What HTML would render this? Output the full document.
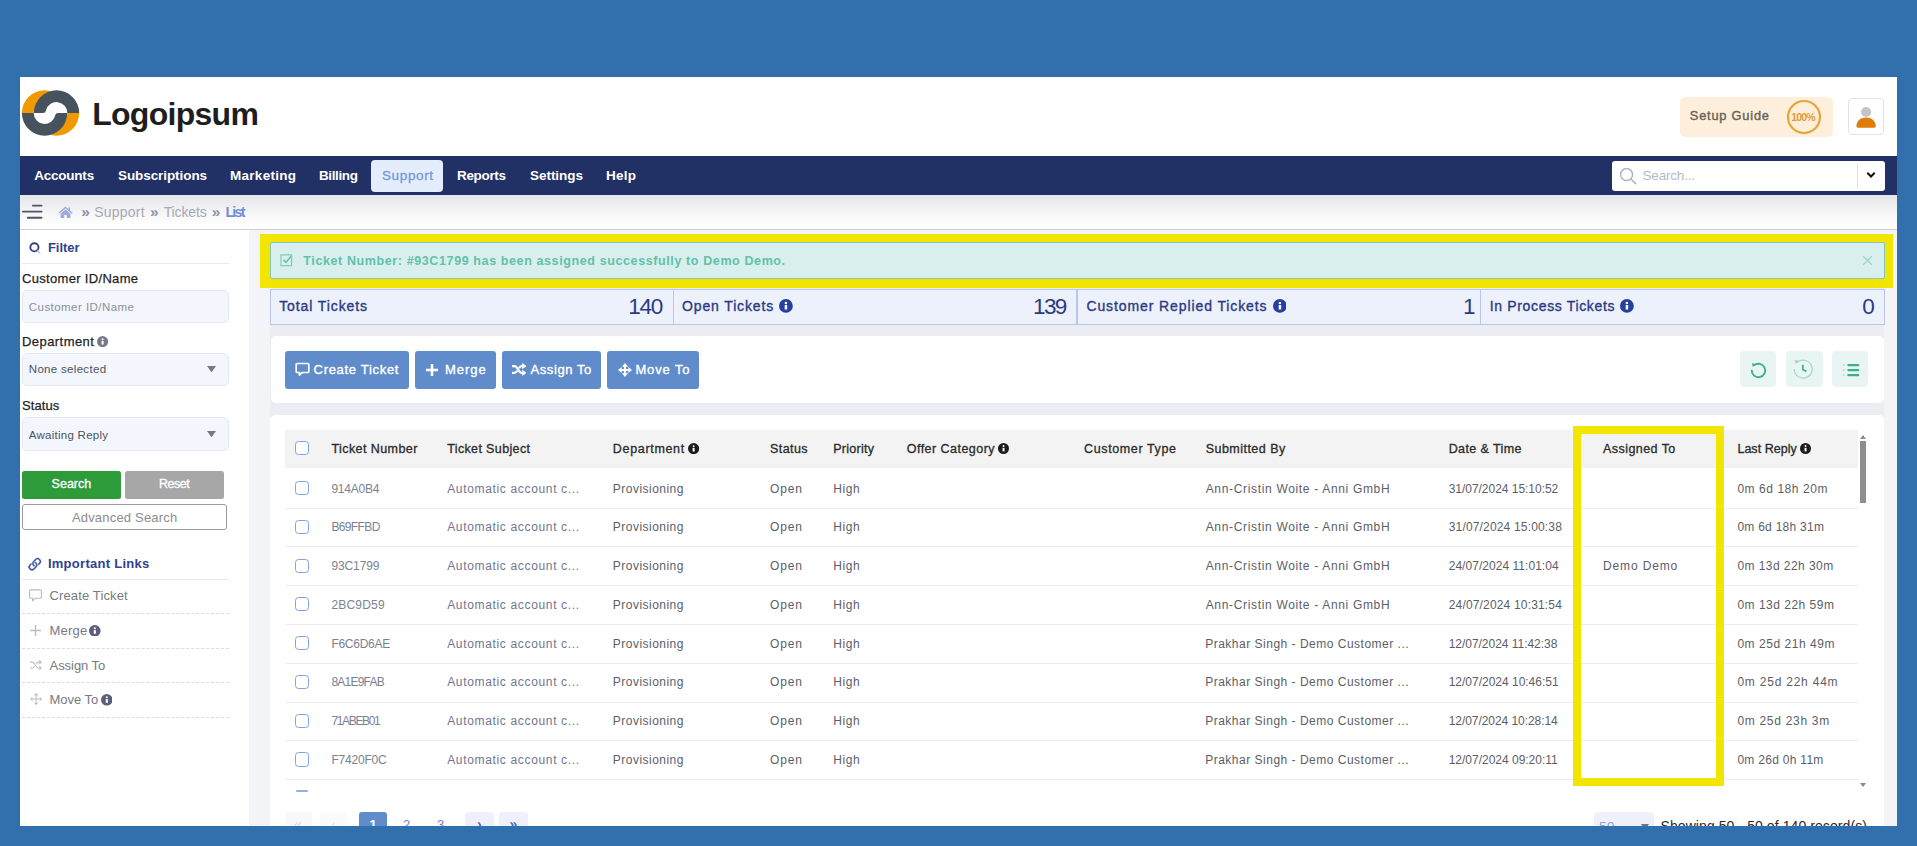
<!DOCTYPE html>
<html lang="en"><head><meta charset="utf-8"><title>Support Tickets</title><style>
html,body{margin:0;padding:0}
body{width:1917px;height:846px;overflow:hidden;background:#3170ad;font-family:"Liberation Sans", sans-serif;position:relative}
#app{position:absolute;left:20px;top:77px;width:1877px;height:749px;overflow:hidden;background:#fff}
#in{position:absolute;left:-20px;top:-77px;width:1917px;height:846px}
.b{position:absolute;display:block}
.t{position:absolute;white-space:nowrap;line-height:1;display:block}
</style></head>
<body><div id="app"><div id="in">
<header>
<svg class="b" style="left:0.0px;top:0.0px;" width="120" height="160" viewBox="0 0 120 160"><path d="M21.90 113.0A22.7 22.7 0 0 1 67.30 113.0L55.50 113.0A10.9 10.9 0 0 0 33.70 113.0Z" fill="#f09a00"/><path d="M34.10 113.0A22.4 22.4 0 0 1 78.90 113.0Z" fill="#fff"/><path d="M33.80 113.0A22.7 22.7 0 0 1 79.20 113.0L67.40 113.0A10.9 10.9 0 0 0 45.91 110.40Q45.60 113.0 43.00 113.0Z" fill="#46525d"/><path d="M33.80 113.0A22.7 22.7 0 0 0 79.20 113.0L67.40 113.0A10.9 10.9 0 0 1 45.60 113.0Z" fill="#f09a00"/><path d="M22.20 113.0A22.4 22.4 0 0 0 67.00 113.0Z" fill="#fff"/><path d="M21.90 113.0A22.7 22.7 0 0 0 67.30 113.0L58.10 113.0Q55.50 113.0 55.19 115.60A10.9 10.9 0 0 1 33.70 113.0Z" fill="#46525d"/></svg>
<span class="t" style="left:92.2px;top:97.9px;font-size:32px;color:#1e1e1e;font-weight:700;letter-spacing:-0.72px;">Logoipsum</span>
<div class="b" style="left:1680.3px;top:96.6px;width:152.7px;height:40.2px;background:#fdefdb;border-radius:5px;"></div>
<span class="t" style="left:1689.8px;top:109.5px;font-size:12.8px;color:#6b6357;letter-spacing:0.80px;-webkit-text-stroke:0.4px #6b6357;">Setup Guide</span>
<svg class="b" style="left:1783.5px;top:97.3px;" width="40" height="40" viewBox="0 0 40 40"><circle cx="20" cy="20" r="16" fill="none" stroke="#e8a534" stroke-width="2.2"/></svg>
<span class="t" style="left:1791.2px;top:112.1px;font-size:10.5px;color:#e39a3c;font-weight:700;letter-spacing:-0.82px;">100%</span>
<div class="b" style="left:1848.0px;top:98.0px;width:36.4px;height:37.0px;background:#fff;border:1px solid #e2e2e2;box-sizing:border-box;border-radius:4px;"></div>
<svg class="b" style="left:1848.0px;top:98.5px;" width="36.4" height="36.1" viewBox="0 0 36.4 36.1"><circle cx="18.1" cy="13" r="5" fill="#c3c4c6"/><path d="M10 28.7a1.600 1.600 0 0 1-1.600-1.700c.3-5.200 4.200-8.600 9.700-8.600s9.400 3.400 9.700 8.600a1.600 1.600 0 0 1-1.600 1.700z" fill="#e07d0a"/></svg>
</header><nav>
<div class="b" style="left:20.0px;top:155.8px;width:1877.0px;height:39.4px;background:#223165;"></div>
<div class="b" style="left:371.0px;top:160.3px;width:72.0px;height:31.3px;background:#e4edfb;border-radius:4px;"></div>
<span class="t" style="left:34.2px;top:168.6px;font-size:13.5px;color:#fff;font-weight:700;letter-spacing:-0.22px;">Accounts</span>
<span class="t" style="left:118.0px;top:168.6px;font-size:13.5px;color:#fff;font-weight:700;letter-spacing:-0.08px;">Subscriptions</span>
<span class="t" style="left:230.0px;top:168.6px;font-size:13.5px;color:#fff;font-weight:700;letter-spacing:0.28px;">Marketing</span>
<span class="t" style="left:319.0px;top:168.6px;font-size:13.5px;color:#fff;font-weight:700;letter-spacing:-0.38px;">Billing</span>
<span class="t" style="left:382.0px;top:168.6px;font-size:13.5px;color:#7399de;letter-spacing:0.62px;-webkit-text-stroke:0.3px #7399de;">Support</span>
<span class="t" style="left:457.0px;top:168.6px;font-size:13.5px;color:#fff;font-weight:700;letter-spacing:-0.34px;">Reports</span>
<span class="t" style="left:530.0px;top:168.6px;font-size:13.5px;color:#fff;font-weight:700;letter-spacing:-0.04px;">Settings</span>
<span class="t" style="left:606.0px;top:168.6px;font-size:13.5px;color:#fff;font-weight:700;letter-spacing:0.24px;">Help</span>
<div class="b" style="left:1612.0px;top:161.3px;width:272.6px;height:29.4px;background:#fff;border-radius:3px;"></div>
<div class="b" style="left:1857.0px;top:163.0px;width:1.0px;height:26.0px;background:#e4e4e4;"></div>
<svg class="b" style="left:1619.0px;top:167.0px;" width="18" height="18" viewBox="0 0 18 18"><circle cx="7.6" cy="7.6" r="6" fill="none" stroke="#aab7c1" stroke-width="1.5"/><path d="M12 12l4.6 4.6" stroke="#aab7c1" stroke-width="1.6" stroke-linecap="round"/></svg>
<span class="t" style="left:1642.5px;top:168.9px;font-size:13.5px;color:#b4bbc3;letter-spacing:-0.19px;">Search...</span>
<svg class="b" style="left:1865.5px;top:170.5px;" width="10" height="8" viewBox="0 0 10 8"><path d="M1.3 1.8l3.7 3.7 3.7-3.7" fill="none" stroke="#111" stroke-width="2"/></svg>
</nav><div class="crumbs">
<div class="b" style="left:20.0px;top:195.2px;width:1877.0px;height:33.8px;background:linear-gradient(#e6e6e9,#fbfbfc 70%,#ffffff)"></div>
<div class="b" style="left:20.0px;top:228.6px;width:1877.0px;height:1.4px;background:#d0d1d4;"></div>
<svg class="b" style="left:21.0px;top:203.0px;" width="22" height="17" viewBox="0 0 22 17"><path d="M11.800 2.600h8.800M2 8.600h18.600M6.800 14.700h13.800" stroke="#50556a" stroke-width="1.900" stroke-linecap="round"/></svg>
<svg class="b" style="left:58.0px;top:205.5px;" width="15" height="12.5" viewBox="0 0 15 12.5"><path d="M7.5 .6L.3 6.8l.9 1 6.3-5.4 6.3 5.4.9-1-2.6-2.2V1.5h-1.6v1.7zM2.6 7.6v4.7h3.6V8.9h2.6v3.4h3.6V7.6L7.5 3.5z" fill="#9dabde"/></svg>
<span class="t" style="left:81.2px;top:203.9px;font-size:15.5px;color:#8a91ad;font-weight:700;letter-spacing:-0.33px;">»</span>
<span class="t" style="left:150.0px;top:203.9px;font-size:15.5px;color:#8a91ad;font-weight:700;letter-spacing:-0.32px;">»</span>
<span class="t" style="left:211.7px;top:203.9px;font-size:15.5px;color:#8a91ad;font-weight:700;letter-spacing:-0.32px;">»</span>
<span class="t" style="left:94.2px;top:204.8px;font-size:14px;color:#a6a9b4;letter-spacing:0.24px;">Support</span>
<span class="t" style="left:163.7px;top:204.8px;font-size:14px;color:#a6a9b4;letter-spacing:-0.14px;">Tickets</span>
<span class="t" style="left:225.5px;top:204.8px;font-size:14px;color:#6c8fdb;font-weight:700;letter-spacing:-1.70px;">List</span>
</div><div class="pagebg">
<div class="b" style="left:249.2px;top:230.0px;width:1647.8px;height:596.0px;background:#f3f4f8;"></div>
<div class="b" style="left:270.3px;top:288.0px;width:1614.1px;height:538.0px;background:#ecedf3;"></div>
</div><aside>
<svg class="b" style="left:28.5px;top:241.7px;" width="13" height="13" viewBox="0 0 13 13"><circle cx="5.400" cy="5.300" r="4.100" fill="none" stroke="#34418a" stroke-width="1.900"/><path d="M8.600 8.600l2.400 2.500" stroke="#a9b0d2" stroke-width="1.100" stroke-linecap="round"/></svg>
<span class="t" style="left:47.9px;top:241.2px;font-size:13px;color:#30438f;font-weight:700;letter-spacing:-0.02px;">Filter</span>
<div class="b" style="left:22.0px;top:262.5px;width:206.6px;height:1.2px;background:#e6e8ec;"></div>
<span class="t" style="left:22.0px;top:271.5px;font-size:13px;color:#1f1f1f;letter-spacing:0.32px;-webkit-text-stroke:0.25px #1f1f1f;">Customer ID/Name</span>
<div class="b" style="left:22.0px;top:289.6px;width:206.6px;height:33.3px;background:#f3f6fd;border:1px solid #e3e8f4;box-sizing:border-box;border-radius:5px;"></div>
<span class="t" style="left:28.8px;top:301.6px;font-size:11.5px;color:#8b909a;letter-spacing:0.45px;">Customer ID/Name</span>
<span class="t" style="left:22.0px;top:334.9px;font-size:13px;color:#1f1f1f;letter-spacing:0.44px;-webkit-text-stroke:0.25px #1f1f1f;">Department</span>
<svg class="b" style="left:97.3px;top:335.8px;" width="11.2" height="11.2" viewBox="0 0 16 16"><circle cx="8" cy="8" r="8" fill="#767b87"/><circle cx="8" cy="4.500" r="1.450" fill="#fff"/><path d="M6.600 7h2.900v5.200H6.600z" fill="#fff"/></svg>
<div class="b" style="left:22.0px;top:352.6px;width:206.6px;height:33.2px;background:#f3f6fd;border:1px solid #e3e8f4;box-sizing:border-box;border-radius:5px;"></div>
<span class="t" style="left:28.8px;top:364.2px;font-size:11.5px;color:#4e535c;letter-spacing:0.31px;">None selected</span>
<svg class="b" style="left:207.0px;top:365.8px;" width="9" height="6.4" viewBox="0 0 9 6.4"><path d="M0 0h9L4.5 6.4z" fill="#767b84"/></svg>
<span class="t" style="left:22.0px;top:399.3px;font-size:13px;color:#1f1f1f;letter-spacing:0.09px;-webkit-text-stroke:0.25px #1f1f1f;">Status</span>
<div class="b" style="left:22.0px;top:417.4px;width:206.6px;height:33.4px;background:#f3f6fd;border:1px solid #e3e8f4;box-sizing:border-box;border-radius:5px;"></div>
<span class="t" style="left:28.8px;top:429.7px;font-size:11.5px;color:#4e535c;letter-spacing:0.26px;">Awaiting Reply</span>
<svg class="b" style="left:207.0px;top:431.0px;" width="9" height="6.4" viewBox="0 0 9 6.4"><path d="M0 0h9L4.5 6.4z" fill="#767b84"/></svg>
<div class="b" style="left:22.1px;top:470.9px;width:98.6px;height:28.4px;background:#2e9b3a;border-radius:2.5px;"></div>
<span class="t" style="left:51.6px;top:478.4px;font-size:12.5px;color:#fff;-webkit-text-stroke:0.3px #fff;">Search</span>
<div class="b" style="left:125.2px;top:470.9px;width:98.5px;height:28.4px;background:#a7a7a7;border-radius:2.5px;"></div>
<span class="t" style="left:158.9px;top:478.4px;font-size:12.5px;color:#fff;letter-spacing:-0.44px;-webkit-text-stroke:0.3px #fff;">Reset</span>
<div class="b" style="left:22.0px;top:504.4px;width:204.8px;height:25.8px;background:#fff;border:1.3px solid #9a9a9a;box-sizing:border-box;border-radius:3px;"></div>
<span class="t" style="left:71.9px;top:510.7px;font-size:13px;color:#8c8c8c;letter-spacing:0.19px;">Advanced Search</span>
<svg class="b" style="left:26.2px;top:555.5px;" width="17.6" height="17.6" viewBox="0 0 16 16"><path fill="#3450a6" stroke="#3450a6" stroke-width="0.450" d="M4.715 6.542 3.343 7.914a3 3 0 1 0 4.243 4.243l1.828-1.829A3 3 0 0 0 8.586 5.500L8 6.086a1 1 0 0 0-.154.199 2 2 0 0 1 .861 3.337L6.880 11.450a2 2 0 1 1-2.830-2.830l.793-.792a4 4 0 0 1-.128-1.287z"/><path fill="#3450a6" stroke="#3450a6" stroke-width="0.450" d="M6.586 4.672A3 3 0 0 0 7.414 9.500l.775-.776a2 2 0 0 1-.896-3.346L9.120 3.550a2 2 0 1 1 2.830 2.830l-.793.792c.112.420.155.855.128 1.287l1.372-1.372a3 3 0 1 0-4.243-4.243z"/></svg>
<span class="t" style="left:47.9px;top:557.4px;font-size:13px;color:#30438f;font-weight:700;letter-spacing:0.28px;">Important Links</span>
<div class="b" style="left:22.0px;top:578.6px;width:206.7px;height:1.2px;background:#e6e8ec;"></div>
<span class="t" style="left:49.5px;top:589.1px;font-size:13px;color:#777b83;letter-spacing:0.13px;">Create Ticket</span>
<svg class="b" style="left:28.9px;top:588.7px;" width="13" height="13" viewBox="0 0 13 13"><path d="M1.6.9h9.8a1 1 0 0 1 1 1v6.4a1 1 0 0 1-1 1H6.3L3.6 11.6V9.3h-2a1 1 0 0 1-1-1V1.9a1 1 0 0 1 1-1z" fill="none" stroke="#b9bcc2" stroke-width="1.1"/></svg>
<span class="t" style="left:49.5px;top:623.8px;font-size:13px;color:#777b83;letter-spacing:0.19px;">Merge</span>
<svg class="b" style="left:29.5px;top:624.6px;" width="11" height="11" viewBox="0 0 11 11"><path d="M5.5 0v11M0 5.5h11" stroke="#b9bcc2" stroke-width="1.4"/></svg>
<svg class="b" style="left:89.2px;top:624.5px;" width="11.6" height="11.6" viewBox="0 0 16 16"><circle cx="8" cy="8" r="8" fill="#5b5f78"/><circle cx="8" cy="4.500" r="1.450" fill="#fff"/><path d="M6.600 7h2.900v5.200H6.600z" fill="#fff"/></svg>
<span class="t" style="left:49.5px;top:658.8px;font-size:13px;color:#777b83;letter-spacing:-0.04px;">Assign To</span>
<svg class="b" style="left:29.5px;top:659.6px;" width="12.1" height="10.2" viewBox="0 0 13 11"><g fill="none" stroke="#b9bcc2" stroke-width="1.2"><path d="M0 2.3h2.6c2.6 0 3.6 6.4 6.4 6.4h2.2M0 8.7h2.6c1 0 1.7-.9 2.3-2M6.7 4.3c.6-1.1 1.300-2 2.300-2h2.2"/><path d="M10 .4l2 1.900-2 1.900M10 6.800l2 1.900-2 1.900" /></g></svg>
<span class="t" style="left:49.5px;top:693.2px;font-size:13px;color:#777b83;letter-spacing:-0.02px;">Move To</span>
<svg class="b" style="left:29.6px;top:693.2px;" width="12.2" height="12.2" viewBox="0 0 13 13"><g fill="none" stroke="#b9bcc2" stroke-width="1.1"><path d="M6.500 1v11M1 6.500h11"/><path d="M4.800 2.600l1.700-1.700 1.700 1.700M4.800 10.400l1.700 1.700 1.700-1.700M2.600 4.800L.9 6.500l1.700 1.700M10.400 4.800l1.700 1.700-1.700 1.700"/></g></svg>
<svg class="b" style="left:100.8px;top:694.2px;" width="11.6" height="11.6" viewBox="0 0 16 16"><circle cx="8" cy="8" r="8" fill="#5b5f78"/><circle cx="8" cy="4.500" r="1.450" fill="#fff"/><path d="M6.600 7h2.900v5.200H6.600z" fill="#fff"/></svg>
<div class="b" style="left:22.0px;top:612.8px;width:206.7px;height:1.0px;border-top:1px dashed #dadce0"></div>
<div class="b" style="left:22.0px;top:647.5px;width:206.7px;height:1.0px;border-top:1px dashed #dadce0"></div>
<div class="b" style="left:22.0px;top:682.4px;width:206.7px;height:1.0px;border-top:1px dashed #dadce0"></div>
<div class="b" style="left:22.0px;top:716.9px;width:206.7px;height:1.0px;border-top:1px dashed #dadce0"></div>
</aside><main><section class="alert">
<div class="b" style="left:260.3px;top:234.2px;width:1632.5px;height:53.4px;background:#f2e500;"></div>
<div class="b" style="left:269.7px;top:242.4px;width:1615.0px;height:37.0px;background:#d9efee;border:1px solid #86c5bd;box-sizing:border-box;border-radius:2px;"></div>
<svg class="b" style="left:280.0px;top:254.0px;" width="13.4" height="12.6" viewBox="0 0 13.4 12.6"><path d="M1 .9h10.600v10.800H1z" fill="none" stroke="#7ecdbb" stroke-width="1.2"/><path d="M3.400 5.800l2.600 2.600 5-6.200" fill="none" stroke="#5cbfa5" stroke-width="1.400"/></svg>
<span class="t" style="left:303.3px;top:254.9px;font-size:12.5px;color:#62c1a9;font-weight:700;letter-spacing:0.61px;">Ticket Number: #93C1799 has been assigned successfully to Demo Demo.</span>
<svg class="b" style="left:1861.5px;top:255.0px;" width="11" height="11" viewBox="0 0 11 11"><path d="M1.200 1.200l8.600 8.600M9.800 1.200l-8.600 8.600" stroke="#9ed5ca" stroke-width="1.300"/></svg>
</section><section class="stats">
<div class="b" style="left:269.7px;top:289.3px;width:1614.9px;height:35.3px;background:#edf1fb;border:1px solid #b9c5ea;box-sizing:border-box;"></div>
<div class="b" style="left:672.8px;top:289.3px;width:1.2px;height:35.3px;background:#b9c5ea;"></div>
<div class="b" style="left:1076.4px;top:289.3px;width:1.2px;height:35.3px;background:#b9c5ea;"></div>
<div class="b" style="left:1480.1px;top:289.3px;width:1.2px;height:35.3px;background:#b9c5ea;"></div>
<span class="t" style="left:279.2px;top:298.7px;font-size:14px;color:#2c3a82;letter-spacing:0.90px;-webkit-text-stroke:0.35px #2c3a82;">Total Tickets</span>
<span class="t" style="left:628.3px;top:295.5px;font-size:22.5px;color:#2c3a82;letter-spacing:-1.27px;">140</span>
<span class="t" style="left:682.0px;top:298.7px;font-size:14px;color:#2c3a82;letter-spacing:0.87px;-webkit-text-stroke:0.35px #2c3a82;">Open Tickets</span>
<svg class="b" style="left:779.3px;top:298.9px;" width="13.8" height="13.8" viewBox="0 0 16 16"><circle cx="8" cy="8" r="8" fill="#27409f"/><circle cx="8" cy="4.500" r="1.450" fill="#fff"/><path d="M6.600 7h2.900v5.200H6.600z" fill="#fff"/></svg>
<span class="t" style="left:1033.1px;top:295.5px;font-size:22.5px;color:#2c3a82;letter-spacing:-1.67px;">139</span>
<span class="t" style="left:1086.4px;top:298.7px;font-size:14px;color:#2c3a82;letter-spacing:0.90px;-webkit-text-stroke:0.35px #2c3a82;">Customer Replied Tickets</span>
<svg class="b" style="left:1272.5px;top:298.9px;" width="13.8" height="13.8" viewBox="0 0 16 16"><circle cx="8" cy="8" r="8" fill="#27409f"/><circle cx="8" cy="4.500" r="1.450" fill="#fff"/><path d="M6.600 7h2.900v5.200H6.600z" fill="#fff"/></svg>
<span class="t" style="left:1463.0px;top:295.5px;font-size:22.5px;color:#2c3a82;">1</span>
<span class="t" style="left:1489.8px;top:298.7px;font-size:14px;color:#2c3a82;letter-spacing:0.65px;-webkit-text-stroke:0.35px #2c3a82;">In Process Tickets</span>
<svg class="b" style="left:1620.3px;top:298.9px;" width="13.8" height="13.8" viewBox="0 0 16 16"><circle cx="8" cy="8" r="8" fill="#27409f"/><circle cx="8" cy="4.500" r="1.450" fill="#fff"/><path d="M6.600 7h2.900v5.200H6.600z" fill="#fff"/></svg>
<span class="t" style="left:1862.3px;top:295.5px;font-size:22.5px;color:#2c3a82;">0</span>
</section><section class="actions">
<div class="b" style="left:270.6px;top:336.2px;width:1613.2px;height:67.1px;background:#fff;border-radius:5px;"></div>
<div class="b" style="left:285.3px;top:350.5px;width:123.6px;height:38.4px;background:#608ccb;border-radius:3px;"></div>
<div class="b" style="left:415.0px;top:350.5px;width:81.0px;height:38.4px;background:#608ccb;border-radius:3px;"></div>
<div class="b" style="left:501.8px;top:350.5px;width:99.2px;height:38.4px;background:#608ccb;border-radius:3px;"></div>
<div class="b" style="left:607.4px;top:350.5px;width:91.8px;height:38.4px;background:#608ccb;border-radius:3px;"></div>
<span class="t" style="left:313.6px;top:362.7px;font-size:13px;color:#fff;letter-spacing:0.69px;-webkit-text-stroke:0.35px #fff;">Create Ticket</span>
<svg class="b" style="left:295.0px;top:361.8px;" width="15" height="15" viewBox="0 0 15 15"><path d="M2.200 1.500h10.600a1 1 0 0 1 1 1v7a1 1 0 0 1-1 1H7.300L4.400 13v-2.500H2.200a1 1 0 0 1-1-1v-7a1 1 0 0 1 1-1z" fill="none" stroke="#fff" stroke-width="1.700" stroke-linejoin="round"/></svg>
<span class="t" style="left:444.9px;top:362.7px;font-size:13px;color:#fff;letter-spacing:0.99px;-webkit-text-stroke:0.35px #fff;">Merge</span>
<svg class="b" style="left:425.6px;top:363.9px;" width="12" height="12" viewBox="0 0 12 12"><path d="M6 0v12M0 6h12" stroke="#fff" stroke-width="2.600"/></svg>
<span class="t" style="left:530.5px;top:362.7px;font-size:13px;color:#fff;letter-spacing:0.58px;-webkit-text-stroke:0.35px #fff;">Assign To</span>
<svg class="b" style="left:512.0px;top:362.9px;" width="14.4" height="13" viewBox="0 0 14.4 13"><g fill="none" stroke="#fff" stroke-width="2.200"><path d="M0 3.100h2.600c3 0 4 6.800 7 6.800h1.400M0 9.900h2.600c1.200 0 2-.9 2.600-2.100M7 5.200c.6-1.200 1.400-2.100 2.600-2.100h1.400"/></g><path d="M10.200 0l4.200 3.100-4.200 3.100zM10.200 6.800l4.200 3.100-4.200 3.100z" fill="#fff"/></svg>
<span class="t" style="left:635.4px;top:362.7px;font-size:13px;color:#fff;letter-spacing:0.87px;-webkit-text-stroke:0.35px #fff;">Move To</span>
<svg class="b" style="left:618.0px;top:362.5px;" width="14" height="14" viewBox="0 0 14 14"><path d="M7 2.500v9M2.500 7h9" stroke="#fff" stroke-width="2.200"/><path d="M7 0l3.100 3.700H3.900zM7 14l3.100-3.700H3.900zM0 7l3.700-3.100v6.200zM14 7l-3.700-3.100v6.200z" fill="#fff"/></svg>
<div class="b" style="left:1739.9px;top:351.0px;width:36.4px;height:36.4px;background:#e8f5f3;border-radius:4px;"></div>
<div class="b" style="left:1786.2px;top:351.0px;width:36.6px;height:36.4px;background:#e8f5f3;border-radius:4px;"></div>
<div class="b" style="left:1831.9px;top:351.0px;width:36.6px;height:36.4px;background:#e8f5f3;border-radius:4px;"></div>
<svg class="b" style="left:1749.0px;top:359.8px;" width="19" height="19" viewBox="0 0 19 19"><path d="M5.100 5.400A6.700 6.700 0 1 1 2.800 9.800" fill="none" stroke="#3dad93" stroke-width="1.900"/><path d="M3 3.200l3.700.7-2.900 3z" fill="#3dad93"/></svg>
<svg class="b" style="left:1791.8px;top:358.2px;" width="22" height="22" viewBox="0 0 22 22"><path d="M5.300 4.300A9 9 0 1 1 2.200 11" fill="none" stroke="#a5d8cb" stroke-width="1.200"/><path d="M2.600 1.800l4.400 1-3.500 3.200z" fill="#a5d8cb"/><path d="M10.800 6.800v4.800l3.600 2" fill="none" stroke="#3dad93" stroke-width="1.700"/></svg>
<svg class="b" style="left:1841.5px;top:362.5px;" width="18" height="15" viewBox="0 0 18 15"><path d="M6.400 2.100h9.800M6.400 7.100h9.800M6.400 12.200h9.800" stroke="#3dad93" stroke-width="2.300" stroke-linecap="round"/><path d="M1.700 2.100h.1M1.700 7.100h.1M1.700 12.200h.1" stroke="#b5e0d5" stroke-width="2" stroke-linecap="round"/></svg>
</section><section class="tickets">
<div class="b" style="left:270.3px;top:415.4px;width:1613.5px;height:424.6px;background:#fff;border-radius:5px;"></div>
<div class="b" style="left:285.4px;top:430.2px;width:1572.2px;height:37.5px;background:#f3f3f3;"></div>
<div class="b" style="left:294.8px;top:441.0px;width:14.6px;height:14.2px;background:#fff;border:1.700px solid #7fa3e4;box-sizing:border-box;border-radius:3.5px;"></div>
<span class="t" style="left:331.4px;top:442.5px;font-size:12.5px;color:#2a2a2a;letter-spacing:0.43px;-webkit-text-stroke:0.3px #2a2a2a;">Ticket Number</span>
<span class="t" style="left:447.2px;top:442.5px;font-size:12.5px;color:#2a2a2a;letter-spacing:0.37px;-webkit-text-stroke:0.3px #2a2a2a;">Ticket Subject</span>
<span class="t" style="left:612.8px;top:442.5px;font-size:12.5px;color:#2a2a2a;letter-spacing:0.68px;-webkit-text-stroke:0.3px #2a2a2a;">Department</span>
<span class="t" style="left:770.0px;top:442.5px;font-size:12.5px;color:#2a2a2a;letter-spacing:0.43px;-webkit-text-stroke:0.3px #2a2a2a;">Status</span>
<span class="t" style="left:833.2px;top:442.5px;font-size:12.5px;color:#2a2a2a;letter-spacing:0.26px;-webkit-text-stroke:0.3px #2a2a2a;">Priority</span>
<span class="t" style="left:906.8px;top:442.5px;font-size:12.5px;color:#2a2a2a;letter-spacing:0.46px;-webkit-text-stroke:0.3px #2a2a2a;">Offer Category</span>
<span class="t" style="left:1084.1px;top:442.5px;font-size:12.5px;color:#2a2a2a;letter-spacing:0.61px;-webkit-text-stroke:0.3px #2a2a2a;">Customer Type</span>
<span class="t" style="left:1205.7px;top:442.5px;font-size:12.5px;color:#2a2a2a;letter-spacing:0.47px;-webkit-text-stroke:0.3px #2a2a2a;">Submitted By</span>
<span class="t" style="left:1448.7px;top:442.5px;font-size:12.5px;color:#2a2a2a;letter-spacing:0.41px;-webkit-text-stroke:0.3px #2a2a2a;">Date &amp; Time</span>
<span class="t" style="left:1603.1px;top:442.5px;font-size:12.5px;color:#2a2a2a;letter-spacing:0.43px;-webkit-text-stroke:0.3px #2a2a2a;">Assigned To</span>
<span class="t" style="left:1737.4px;top:442.5px;font-size:12.5px;color:#2a2a2a;letter-spacing:0.04px;-webkit-text-stroke:0.3px #2a2a2a;">Last Reply</span>
<svg class="b" style="left:687.5px;top:442.7px;" width="11.2" height="11.2" viewBox="0 0 16 16"><circle cx="8" cy="8" r="8" fill="#1c1c1c"/><circle cx="8" cy="4.500" r="1.450" fill="#fff"/><path d="M6.600 7h2.900v5.200H6.600z" fill="#fff"/></svg>
<svg class="b" style="left:997.8px;top:442.8px;" width="11" height="11" viewBox="0 0 16 16"><circle cx="8" cy="8" r="8" fill="#1c1c1c"/><circle cx="8" cy="4.500" r="1.450" fill="#fff"/><path d="M6.600 7h2.900v5.200H6.600z" fill="#fff"/></svg>
<svg class="b" style="left:1800.2px;top:442.8px;" width="11" height="11" viewBox="0 0 16 16"><circle cx="8" cy="8" r="8" fill="#1c1c1c"/><circle cx="8" cy="4.500" r="1.450" fill="#fff"/><path d="M6.600 7h2.900v5.200H6.600z" fill="#fff"/></svg>
<div class="b" style="left:294.8px;top:480.9px;width:14.6px;height:14.2px;background:#fff;border:1.700px solid #7fa3e4;box-sizing:border-box;border-radius:3.5px;"></div>
<span class="t" style="left:331.4px;top:482.5px;font-size:12px;color:#7c8290;letter-spacing:-0.22px;">914A0B4</span>
<span class="t" style="left:447.2px;top:482.5px;font-size:12px;color:#70768f;letter-spacing:0.66px;">Automatic account c...</span>
<span class="t" style="left:612.8px;top:482.5px;font-size:12px;color:#5c5e67;letter-spacing:0.48px;">Provisioning</span>
<span class="t" style="left:770.0px;top:482.5px;font-size:12px;color:#5c5e67;letter-spacing:0.88px;">Open</span>
<span class="t" style="left:833.2px;top:482.5px;font-size:12px;color:#5c5e67;letter-spacing:0.57px;">High</span>
<span class="t" style="left:1205.7px;top:482.5px;font-size:12px;color:#5c5e67;letter-spacing:0.67px;">Ann-Cristin Woite - Anni GmbH</span>
<span class="t" style="left:1448.7px;top:482.5px;font-size:12px;color:#5c5e67;letter-spacing:-0.03px;">31/07/2024 15:10:52</span>
<span class="t" style="left:1737.4px;top:482.5px;font-size:12px;color:#5c5e67;letter-spacing:0.55px;">0m 6d 18h 20m</span>
<div class="b" style="left:285.4px;top:507.6px;width:1572.2px;height:1.0px;background:#ebecef;"></div>
<div class="b" style="left:294.8px;top:519.7px;width:14.6px;height:14.2px;background:#fff;border:1.700px solid #7fa3e4;box-sizing:border-box;border-radius:3.5px;"></div>
<span class="t" style="left:331.4px;top:521.3px;font-size:12px;color:#7c8290;letter-spacing:-0.63px;">B69FFBD</span>
<span class="t" style="left:447.2px;top:521.3px;font-size:12px;color:#70768f;letter-spacing:0.66px;">Automatic account c...</span>
<span class="t" style="left:612.8px;top:521.3px;font-size:12px;color:#5c5e67;letter-spacing:0.48px;">Provisioning</span>
<span class="t" style="left:770.0px;top:521.3px;font-size:12px;color:#5c5e67;letter-spacing:0.88px;">Open</span>
<span class="t" style="left:833.2px;top:521.3px;font-size:12px;color:#5c5e67;letter-spacing:0.57px;">High</span>
<span class="t" style="left:1205.7px;top:521.3px;font-size:12px;color:#5c5e67;letter-spacing:0.67px;">Ann-Cristin Woite - Anni GmbH</span>
<span class="t" style="left:1448.7px;top:521.3px;font-size:12px;color:#5c5e67;letter-spacing:0.17px;">31/07/2024 15:00:38</span>
<span class="t" style="left:1737.4px;top:521.3px;font-size:12px;color:#5c5e67;letter-spacing:0.26px;">0m 6d 18h 31m</span>
<div class="b" style="left:285.4px;top:546.4px;width:1572.2px;height:1.0px;background:#ebecef;"></div>
<div class="b" style="left:294.8px;top:558.5px;width:14.6px;height:14.2px;background:#fff;border:1.700px solid #7fa3e4;box-sizing:border-box;border-radius:3.5px;"></div>
<span class="t" style="left:331.4px;top:560.1px;font-size:12px;color:#7c8290;letter-spacing:-0.10px;">93C1799</span>
<span class="t" style="left:447.2px;top:560.1px;font-size:12px;color:#70768f;letter-spacing:0.66px;">Automatic account c...</span>
<span class="t" style="left:612.8px;top:560.1px;font-size:12px;color:#5c5e67;letter-spacing:0.48px;">Provisioning</span>
<span class="t" style="left:770.0px;top:560.1px;font-size:12px;color:#5c5e67;letter-spacing:0.88px;">Open</span>
<span class="t" style="left:833.2px;top:560.1px;font-size:12px;color:#5c5e67;letter-spacing:0.57px;">High</span>
<span class="t" style="left:1205.7px;top:560.1px;font-size:12px;color:#5c5e67;letter-spacing:0.67px;">Ann-Cristin Woite - Anni GmbH</span>
<span class="t" style="left:1448.7px;top:560.1px;font-size:12px;color:#5c5e67;letter-spacing:0.04px;">24/07/2024 11:01:04</span>
<span class="t" style="left:1603.0px;top:560.1px;font-size:12px;color:#5c5e67;letter-spacing:0.86px;">Demo Demo</span>
<span class="t" style="left:1737.4px;top:560.1px;font-size:12px;color:#5c5e67;letter-spacing:0.44px;">0m 13d 22h 30m</span>
<div class="b" style="left:285.4px;top:585.2px;width:1572.2px;height:1.0px;background:#ebecef;"></div>
<div class="b" style="left:294.8px;top:597.2px;width:14.6px;height:14.2px;background:#fff;border:1.700px solid #7fa3e4;box-sizing:border-box;border-radius:3.5px;"></div>
<span class="t" style="left:331.4px;top:598.9px;font-size:12px;color:#7c8290;letter-spacing:0.21px;">2BC9D59</span>
<span class="t" style="left:447.2px;top:598.9px;font-size:12px;color:#70768f;letter-spacing:0.66px;">Automatic account c...</span>
<span class="t" style="left:612.8px;top:598.9px;font-size:12px;color:#5c5e67;letter-spacing:0.48px;">Provisioning</span>
<span class="t" style="left:770.0px;top:598.9px;font-size:12px;color:#5c5e67;letter-spacing:0.88px;">Open</span>
<span class="t" style="left:833.2px;top:598.9px;font-size:12px;color:#5c5e67;letter-spacing:0.57px;">High</span>
<span class="t" style="left:1205.7px;top:598.9px;font-size:12px;color:#5c5e67;letter-spacing:0.67px;">Ann-Cristin Woite - Anni GmbH</span>
<span class="t" style="left:1448.7px;top:598.9px;font-size:12px;color:#5c5e67;letter-spacing:0.17px;">24/07/2024 10:31:54</span>
<span class="t" style="left:1737.4px;top:598.9px;font-size:12px;color:#5c5e67;letter-spacing:0.50px;">0m 13d 22h 59m</span>
<div class="b" style="left:285.4px;top:623.9px;width:1572.2px;height:1.0px;background:#ebecef;"></div>
<div class="b" style="left:294.8px;top:636.0px;width:14.6px;height:14.2px;background:#fff;border:1.700px solid #7fa3e4;box-sizing:border-box;border-radius:3.5px;"></div>
<span class="t" style="left:331.4px;top:637.7px;font-size:12px;color:#7c8290;letter-spacing:-0.26px;">F6C6D6AE</span>
<span class="t" style="left:447.2px;top:637.7px;font-size:12px;color:#70768f;letter-spacing:0.66px;">Automatic account c...</span>
<span class="t" style="left:612.8px;top:637.7px;font-size:12px;color:#5c5e67;letter-spacing:0.48px;">Provisioning</span>
<span class="t" style="left:770.0px;top:637.7px;font-size:12px;color:#5c5e67;letter-spacing:0.88px;">Open</span>
<span class="t" style="left:833.2px;top:637.7px;font-size:12px;color:#5c5e67;letter-spacing:0.57px;">High</span>
<span class="t" style="left:1205.2px;top:637.7px;font-size:12px;color:#5c5e67;letter-spacing:0.50px;">Prakhar Singh - Demo Customer ...</span>
<span class="t" style="left:1448.7px;top:637.7px;font-size:12px;color:#5c5e67;letter-spacing:-0.03px;">12/07/2024 11:42:38</span>
<span class="t" style="left:1737.4px;top:637.7px;font-size:12px;color:#5c5e67;letter-spacing:0.54px;">0m 25d 21h 49m</span>
<div class="b" style="left:285.4px;top:662.7px;width:1572.2px;height:1.0px;background:#ebecef;"></div>
<div class="b" style="left:294.8px;top:674.8px;width:14.6px;height:14.2px;background:#fff;border:1.700px solid #7fa3e4;box-sizing:border-box;border-radius:3.5px;"></div>
<span class="t" style="left:331.4px;top:676.4px;font-size:12px;color:#7c8290;letter-spacing:-0.77px;">8A1E9FAB</span>
<span class="t" style="left:447.2px;top:676.4px;font-size:12px;color:#70768f;letter-spacing:0.66px;">Automatic account c...</span>
<span class="t" style="left:612.8px;top:676.4px;font-size:12px;color:#5c5e67;letter-spacing:0.48px;">Provisioning</span>
<span class="t" style="left:770.0px;top:676.4px;font-size:12px;color:#5c5e67;letter-spacing:0.88px;">Open</span>
<span class="t" style="left:833.2px;top:676.4px;font-size:12px;color:#5c5e67;letter-spacing:0.57px;">High</span>
<span class="t" style="left:1205.2px;top:676.4px;font-size:12px;color:#5c5e67;letter-spacing:0.50px;">Prakhar Singh - Demo Customer ...</span>
<span class="t" style="left:1448.7px;top:676.4px;font-size:12px;color:#5c5e67;letter-spacing:-0.01px;">12/07/2024 10:46:51</span>
<span class="t" style="left:1737.4px;top:676.4px;font-size:12px;color:#5c5e67;letter-spacing:0.78px;">0m 25d 22h 44m</span>
<div class="b" style="left:285.4px;top:701.5px;width:1572.2px;height:1.0px;background:#ebecef;"></div>
<div class="b" style="left:294.8px;top:713.6px;width:14.6px;height:14.2px;background:#fff;border:1.700px solid #7fa3e4;box-sizing:border-box;border-radius:3.5px;"></div>
<span class="t" style="left:331.4px;top:715.2px;font-size:12px;color:#7c8290;letter-spacing:-1.33px;">71ABEB01</span>
<span class="t" style="left:447.2px;top:715.2px;font-size:12px;color:#70768f;letter-spacing:0.66px;">Automatic account c...</span>
<span class="t" style="left:612.8px;top:715.2px;font-size:12px;color:#5c5e67;letter-spacing:0.48px;">Provisioning</span>
<span class="t" style="left:770.0px;top:715.2px;font-size:12px;color:#5c5e67;letter-spacing:0.88px;">Open</span>
<span class="t" style="left:833.2px;top:715.2px;font-size:12px;color:#5c5e67;letter-spacing:0.57px;">High</span>
<span class="t" style="left:1205.2px;top:715.2px;font-size:12px;color:#5c5e67;letter-spacing:0.50px;">Prakhar Singh - Demo Customer ...</span>
<span class="t" style="left:1448.7px;top:715.2px;font-size:12px;color:#5c5e67;letter-spacing:-0.06px;">12/07/2024 10:28:14</span>
<span class="t" style="left:1737.4px;top:715.2px;font-size:12px;color:#5c5e67;letter-spacing:0.70px;">0m 25d 23h 3m</span>
<div class="b" style="left:285.4px;top:740.3px;width:1572.2px;height:1.0px;background:#ebecef;"></div>
<div class="b" style="left:294.8px;top:752.4px;width:14.6px;height:14.2px;background:#fff;border:1.700px solid #7fa3e4;box-sizing:border-box;border-radius:3.5px;"></div>
<span class="t" style="left:331.4px;top:754.0px;font-size:12px;color:#7c8290;letter-spacing:-0.19px;">F7420F0C</span>
<span class="t" style="left:447.2px;top:754.0px;font-size:12px;color:#70768f;letter-spacing:0.66px;">Automatic account c...</span>
<span class="t" style="left:612.8px;top:754.0px;font-size:12px;color:#5c5e67;letter-spacing:0.48px;">Provisioning</span>
<span class="t" style="left:770.0px;top:754.0px;font-size:12px;color:#5c5e67;letter-spacing:0.88px;">Open</span>
<span class="t" style="left:833.2px;top:754.0px;font-size:12px;color:#5c5e67;letter-spacing:0.57px;">High</span>
<span class="t" style="left:1205.2px;top:754.0px;font-size:12px;color:#5c5e67;letter-spacing:0.50px;">Prakhar Singh - Demo Customer ...</span>
<span class="t" style="left:1448.7px;top:754.0px;font-size:12px;color:#5c5e67;letter-spacing:-0.01px;">12/07/2024 09:20:11</span>
<span class="t" style="left:1737.4px;top:754.0px;font-size:12px;color:#5c5e67;letter-spacing:0.29px;">0m 26d 0h 11m</span>
<div class="b" style="left:285.4px;top:779.1px;width:1572.2px;height:1.0px;background:#ebecef;"></div>
<div class="b" style="left:296.0px;top:790.2px;width:12.3px;height:2.0px;background:#94aee2;border-radius:1px;"></div>
<div class="b" style="left:1860.1px;top:441.0px;width:6.4px;height:62.1px;background:#8e8e8e;"></div>
<svg class="b" style="left:1860.3px;top:434.5px;" width="6" height="4" viewBox="0 0 6 4"><path d="M0 4L3 0l3 4z" fill="#8a8a8a"/></svg>
<svg class="b" style="left:1860.3px;top:783.0px;" width="6" height="4" viewBox="0 0 6 4"><path d="M0 0h6L3 4z" fill="#8a8a8a"/></svg>
<div class="b" style="left:1572.9px;top:426.3px;width:150.9px;height:359.9px;border:8px solid #f2e500;box-sizing:border-box;"></div>
</section><section class="pager">
<div class="b" style="left:286.3px;top:811.7px;width:25.3px;height:28.3px;background:#f7f8fc;border-radius:3px;"></div>
<div class="b" style="left:320.0px;top:811.7px;width:27.3px;height:28.3px;background:#fbfbfd;border-radius:3px;"></div>
<div class="b" style="left:359.0px;top:811.7px;width:28.1px;height:28.3px;background:#608ccb;border-radius:3px;"></div>
<div class="b" style="left:464.7px;top:811.7px;width:29.5px;height:28.3px;background:#eef1fb;border-radius:3px;"></div>
<div class="b" style="left:499.4px;top:811.7px;width:28.2px;height:28.3px;background:#eef1fb;border-radius:3px;"></div>
<span class="t" style="left:294.0px;top:816.6px;font-size:14px;color:#d9dce8;">«</span>
<span class="t" style="left:331.0px;top:816.6px;font-size:14px;color:#e3e5ee;">‹</span>
<span class="t" style="left:369.5px;top:817.5px;font-size:13px;color:#fff;font-weight:700;">1</span>
<span class="t" style="left:403.0px;top:817.5px;font-size:13px;color:#6d7fd0;">2</span>
<span class="t" style="left:437.0px;top:817.5px;font-size:13px;color:#6d7fd0;">3</span>
<span class="t" style="left:477.0px;top:816.6px;font-size:14px;color:#5468c0;font-weight:700;">›</span>
<span class="t" style="left:509.5px;top:816.6px;font-size:14px;color:#5468c0;font-weight:700;">»</span>
<div class="b" style="left:1593.5px;top:811.9px;width:60.0px;height:28.1px;background:#eef1fb;border-radius:3px;"></div>
<span class="t" style="left:1599.0px;top:819.6px;font-size:14px;color:#8ea0dd;">50</span>
<svg class="b" style="left:1640.5px;top:823.5px;" width="8" height="6" viewBox="0 0 8 6"><path d="M0 0h8L4 6z" fill="#70757f"/></svg>
<span class="t" style="left:1660.5px;top:819.1px;font-size:14px;color:#2b2b2b;letter-spacing:0.08px;">Showing 50 - 50 of 140 record(s)</span>
</section></main>
</div></div></body></html>
